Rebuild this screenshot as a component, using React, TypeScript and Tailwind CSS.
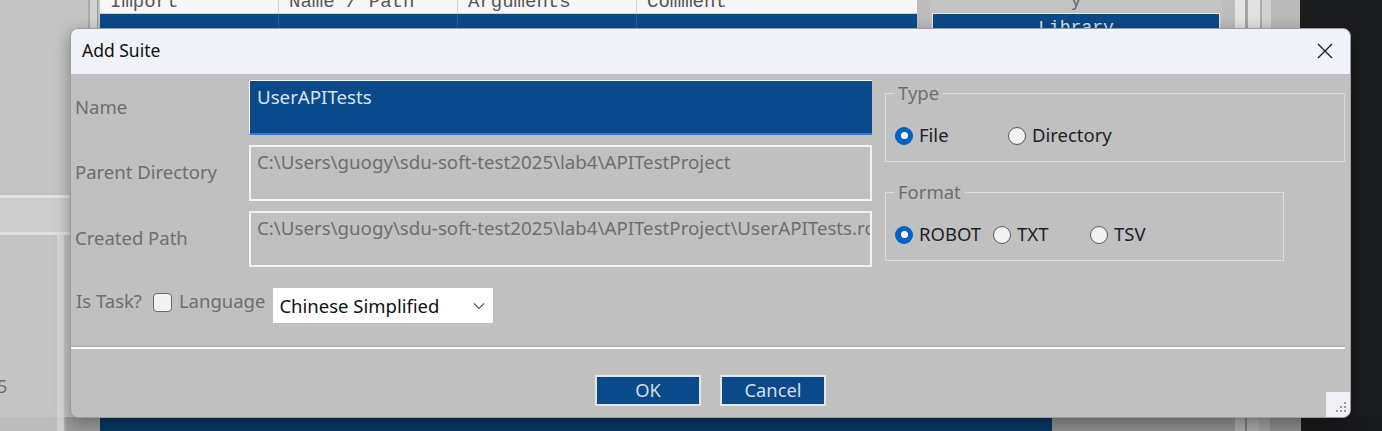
import React from 'react';

const font = { fontFamily: '"Noto Sans", "Open Sans", sans-serif' };

function Radio({ checked, label }: { checked?: boolean; label: string }) {
  return (
    <div className="flex items-center gap-[6px]">
      {checked ? (
        <span className="w-[18px] h-[18px] rounded-full bg-[#0062c3] flex items-center justify-center">
          <span className="w-[7px] h-[7px] rounded-full bg-white" />
        </span>
      ) : (
        <span className="w-[18px] h-[18px] rounded-full bg-[#f3f3f3] border border-[#5a5a5a]" />
      )}
      <span className="text-[18.5px] text-[#1e1e2a] leading-none">{label}</span>
    </div>
  );
}

function Field({ label, value, active }: { label: string; value: string; active?: boolean }) {
  return (
    <div className="flex items-center">
      <div className="w-[174px] text-[18.5px] text-[#6e6e6e] mt-[-2px]">{label}</div>
      <div
        className={
          active
            ? 'w-[623px] h-[55px] bg-[#0b4a8a] border-t border-l border-white border-b-2 border-b-[#2f7fd6] px-[7px] pt-[2px] overflow-hidden'
            : 'w-[623px] h-[56px] bg-[#c0c0c0] border-2 border-[#f2f2f2] px-[6px] pt-[1px] overflow-hidden'
        }
      >
        <div
          className={
            active
              ? 'text-[18.7px] text-[#dbe3ee] whitespace-nowrap'
              : 'text-[18.7px] text-[#6e6e6e] whitespace-nowrap'
          }
        >
          {value}
        </div>
      </div>
    </div>
  );
}

function Group({ title, width, children }: { title: string; width: string; children: React.ReactNode }) {
  return (
    <div className={`relative ${width} h-[69px] border border-[#dcdcdc] flex items-center pl-[9px] pt-[16px]`}>
      <span className="absolute left-[8px] top-[-12px] bg-[#c0c0c0] px-[4px] text-[18.5px] leading-[22px] text-[#6e6e6e]">
        {title}
      </span>
      {children}
    </div>
  );
}

export default function App() {
  return (
    <div className="relative w-[1382px] h-[431px] overflow-hidden bg-[#c2c2c2]" style={font}>
      {/* background application */}
      <div className="flex flex-col w-full h-full">
        <div className="flex h-[417px]">
          <div className="w-[88px] flex flex-col bg-[#c4c4c4]">
            <div className="h-[195px]" />
            <div className="h-[3px] bg-[#e2e2e2]" />
            <div className="h-[34px] bg-[#cdcdcd]" />
            <div className="h-[3px] bg-[#e0e0e0]" />
            <div className="flex-1 flex">
              <div className="w-[57px] relative">
                <span className="absolute left-[-3px] top-[138px] text-[18px] text-[#707070]">5</span>
              </div>
              <div className="w-[7px] bg-[#d8d8d8]" />
              <div className="flex-1" />
            </div>
          </div>
          <div className="w-[12px] flex">
            <div className="w-[2px] bg-[#a9a9a9]" />
            <div className="w-[7px] bg-[#d2d2d2]" />
            <div className="w-[1px] bg-[#9a9a9a]" />
          </div>
          <div className="w-[817px] flex flex-col">
            <div className="h-[14px] bg-[#f7f7f7] flex overflow-hidden border-b border-[#cfcfcf]" style={{ fontFamily: '"Liberation Mono", monospace' }}>
              {['Import', 'Name / Path', 'Arguments', 'Comment'].map((t, i) => (
                <div
                  key={t}
                  className={`${i === 3 ? 'flex-1' : 'w-[179px] border-r border-[#d4d4d4]'} pl-[10px] text-[19px] text-[#555] leading-[20px] mt-[-8px]`}
                >
                  {t}
                </div>
              ))}
            </div>
            <div className="h-[15px] bg-[#0b4a8a] flex">
              <div className="w-[179px] border-r border-[#2b5f96]" />
              <div className="w-[179px] border-r border-[#2b5f96]" />
              <div className="w-[179px] border-r border-[#2b5f96]" />
            </div>
            <div className="flex-1 bg-[#c6c6c6]" />
          </div>
          <div className="w-[13px] bg-[#bcbcbc]" />
          <div className="w-[292px] flex flex-col bg-[#c3c3c3] px-[2px]">
            <div className="h-[13px] overflow-hidden text-center text-[17px] leading-[0px] text-[#666]">y</div>
            <div className="h-[16px] bg-[#0b4a8a] border border-[#e8e8e8] overflow-hidden text-center text-[18px] leading-[28px] text-[#dbe3ee]" style={{ fontFamily: '"Liberation Mono", monospace' }}>
              Library
            </div>
          </div>
          <div className="w-[13px] bg-[#bdbdbd]" />
          <div className="w-[36px] flex bg-[#cfcfcf]">
            <div className="w-[10px] bg-[#e4e4e4]" />
            <div className="w-[3px] bg-[#a5a5a5]" />
            <div className="w-[12px] bg-[#e1e1e1]" />
            <div className="w-[2px] bg-[#ababab]" />
            <div className="flex-1 bg-[#d2d2d2]" />
          </div>
          <div className="w-[29px] bg-[#bababa]" />
          <div className="flex-1 bg-[#1c1d1f]" />
        </div>
        <div className="flex h-[14px]">
          <div className="w-[57px] bg-[#bcbcbc]" />
          <div className="w-[7px] bg-[#cfcfcf]" />
          <div className="w-[36px] bg-[#9a9a9a] border-l-2 border-[#aaa]" />
          <div className="w-[952px] bg-[#0a3562]" />
          <div className="w-[183px] bg-[#8d8d8d]" />
          <div className="w-[35px] flex bg-[#9b9b9b]">
            <div className="w-[10px] bg-[#a8a8a8]" />
            <div className="w-[2px] bg-[#7a7a7a]" />
            <div className="w-[12px] bg-[#a6a6a6]" />
          </div>
          <div className="w-[31px] bg-[#8a8a8a]" />
          <div className="flex-1 bg-[#191a1c]" />
        </div>
      </div>

      {/* Add Suite dialog */}
      <div className="absolute left-[70px] top-[28px] w-[1281px] h-[390px] rounded-[8px] overflow-hidden border border-[#9c9c9c] shadow-[0_4px_16px_rgba(0,0,0,0.35)] flex flex-col bg-[#c0c0c0]">
        <div className="h-[45px] bg-[#f0f3f9] flex items-center justify-between pl-[11px] pr-[16px]">
          <span className="text-[17.5px] text-[#111] mt-[-2px]">Add Suite</span>
          <svg width="16" height="16" viewBox="0 0 16 16" className="mr-[1px] mt-[-2px]">
            <path d="M1 1 L15 15 M15 1 L1 15" stroke="#1a1a1a" strokeWidth="1.3" fill="none" />
          </svg>
        </div>

        <div className="flex-1 flex flex-col">
          <div className="flex pl-[4px] pt-[6px]">
            <div className="flex flex-col gap-[10px]">
              <Field label="Name" value="UserAPITests" active />
              <Field label="Parent Directory" value="C:\Users\guogy\sdu-soft-test2025\lab4\APITestProject" />
              <Field label="Created Path" value="C:\Users\guogy\sdu-soft-test2025\lab4\APITestProject\UserAPITests.robot" />
              <div className="flex items-center mt-[11px]">
                <span className="text-[18.5px] text-[#6e6e6e] ml-[1px] mt-[-10px]">Is Task?</span>
                <span className="w-[19px] h-[19px] rounded-[4px] bg-[#f2f2f2] border border-[#6a6a6a] ml-[11px] mt-[-6px]" />
                <span className="text-[18.5px] text-[#6e6e6e] ml-[7px] mt-[-10px]">Language</span>
                <div className="w-[220px] h-[35px] bg-white ml-[8px] flex items-center justify-between pl-[6px] pr-[8px]">
                  <span className="text-[18.5px] text-[#111]">Chinese Simplified</span>
                  <svg width="12" height="8" viewBox="0 0 12 8">
                    <path d="M1 1.5 L6 6.5 L11 1.5" stroke="#555" strokeWidth="1.1" fill="none" />
                  </svg>
                </div>
              </div>
            </div>

            <div className="flex flex-col ml-[13px] pt-[13px] gap-[30px]">
              <Group title="Type" width="w-[460px]">
                <div className="w-[113px]">
                  <Radio checked label="File" />
                </div>
                <Radio label="Directory" />
              </Group>
              <Group title="Format" width="w-[399px]">
                <div className="w-[98px]">
                  <Radio checked label="ROBOT" />
                </div>
                <div className="w-[97px]">
                  <Radio label="TXT" />
                </div>
                <Radio label="TSV" />
              </Group>
            </div>
          </div>

          <div className="mt-[23px] mr-[5px] border-t border-[#a4a4a4]">
            <div className="h-[2px] border-t-2 border-white" />
          </div>

          <div className="flex-1 flex justify-center items-start pt-[26px] gap-[19px] relative">
            <button className="w-[106px] h-[31px] bg-[#0b4a8a] border-2 border-[#e6e6e6] text-[18.3px] text-[#d6dde8] leading-none">
              OK
            </button>
            <button className="w-[106px] h-[31px] bg-[#0b4a8a] border-2 border-[#e6e6e6] text-[18.3px] text-[#d6dde8] leading-none">
              Cancel
            </button>
            <div className="absolute right-0 bottom-0 w-[24px] h-[25px] bg-[#eef0f5]">
              <svg width="24" height="25" viewBox="0 0 24 25">
                {[
                  [18, 10],
                  [14, 14],
                  [18, 14],
                  [10, 18],
                  [14, 18],
                  [18, 18],
                ].map(([x, y]) => (
                  <rect key={`${x}-${y}`} x={x} y={y} width="2" height="2" fill="#9a9a9a" />
                ))}
              </svg>
            </div>
          </div>
        </div>
      </div>
    </div>
  );
}
